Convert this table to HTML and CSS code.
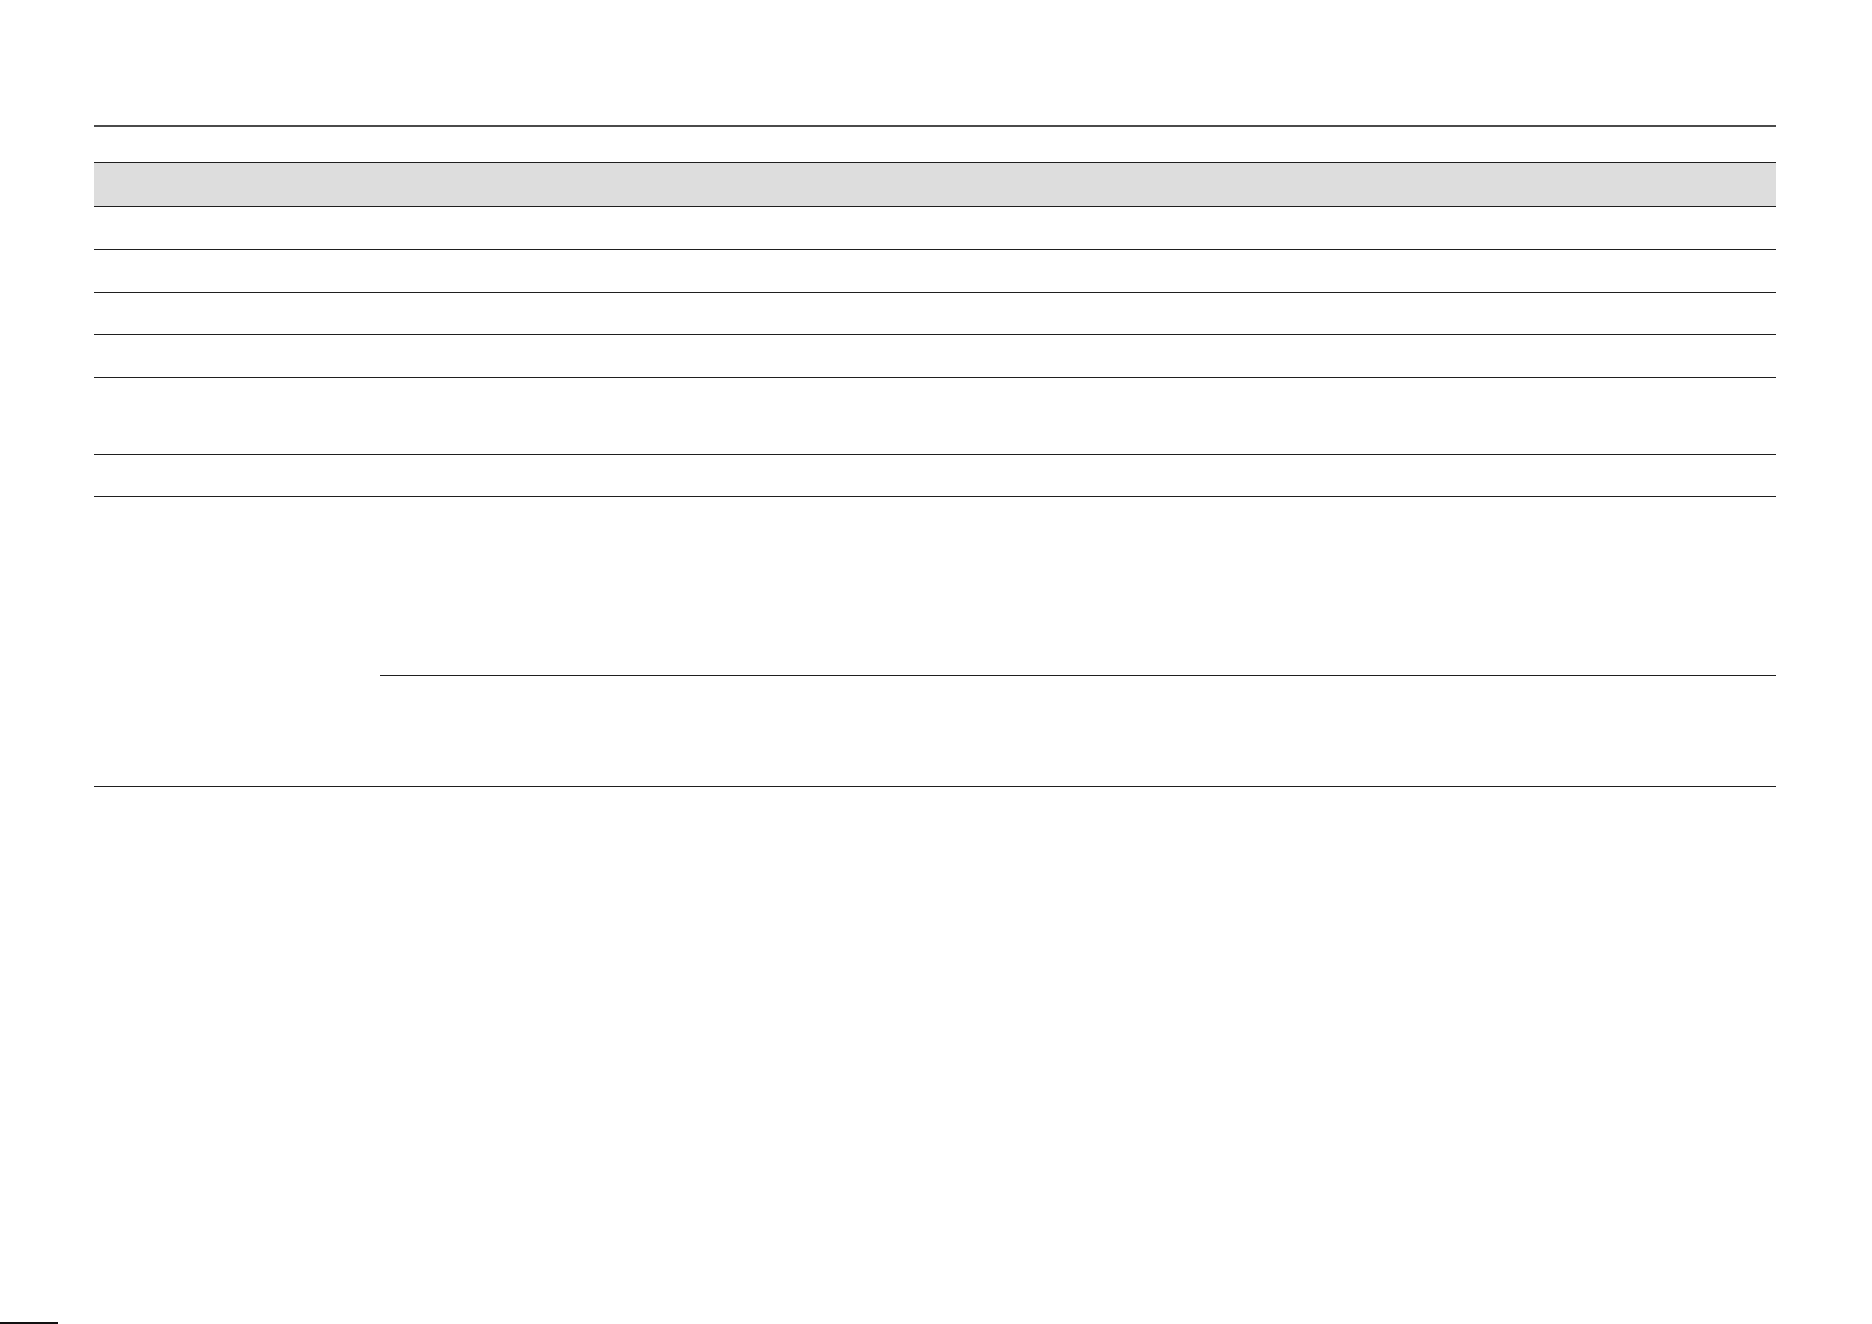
FILE: index.html
```html
<!DOCTYPE html>
<html lang="en">
<head>
<meta charset="utf-8">
<title>Table</title>
<link rel="stylesheet" href="styles.css">
</head>
<body>
<div class="sheet">
  <div class="rule"></div>
  <div class="table">
    <div class="row head"><div class="cell c1"></div><div class="cell c2"></div></div>
    <div class="row h43"><div class="cell c1"></div><div class="cell c2"></div></div>
    <div class="row h43"><div class="cell c1"></div><div class="cell c2"></div></div>
    <div class="row h42"><div class="cell c1"></div><div class="cell c2"></div></div>
    <div class="row h43"><div class="cell c1"></div><div class="cell c2"></div></div>
    <div class="row h77"><div class="cell c1"></div><div class="cell c2"></div></div>
    <div class="row h42"><div class="cell c1"></div><div class="cell c2"></div></div>
    <div class="row group">
      <div class="cell c1"></div>
      <div class="sub">
        <div class="subrow s1"></div>
        <div class="subrow s2"></div>
      </div>
    </div>
  </div>
</div>
<div class="thumb"></div>
</body>
</html>
```
FILE: styles.css
```css
html, body {
  margin: 0;
  padding: 0;
  background: #ffffff;
  font-family: "Liberation Sans", Arial, sans-serif;
}

.sheet {
  width: 1682px;
  margin: 125px 0 0 94px;
}

.rule {
  height: 2px;
  background: #4b4b4b;
}

.table {
  margin-top: 35px;
  display: flex;
  flex-direction: column;
}

.row {
  display: flex;
  box-sizing: border-box;
  border-bottom: 1px solid #1f1f1f;
}

.row.head {
  height: 45px;
  border-top: 1px solid #1f1f1f;
  background: #dddddd;
}

.row.h43 { height: 43px; }
.row.h42 { height: 42px; }
.row.h77 { height: 77px; }

.cell.c1 {
  width: 286px;
  flex: none;
}

.cell.c2 {
  flex: 1;
}

.row.group {
  height: 290px;
}

.sub {
  flex: 1;
  display: flex;
  flex-direction: column;
}

.subrow.s1 {
  height: 179px;
  box-sizing: border-box;
  border-bottom: 1px solid #1f1f1f;
}

.subrow.s2 {
  flex: 1;
}

.thumb {
  position: fixed;
  left: 0;
  bottom: 0;
  width: 58px;
  height: 2px;
  background: #111111;
}
```
